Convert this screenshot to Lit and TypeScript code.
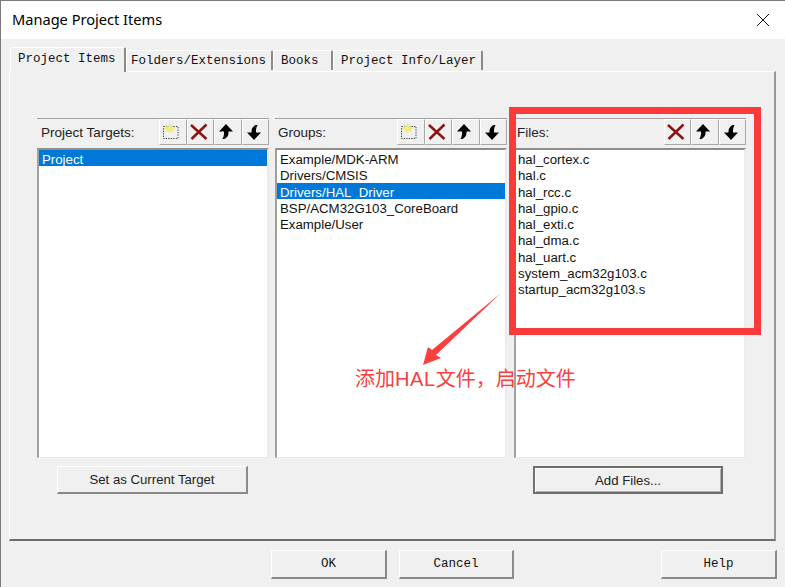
import { LitElement, html, css, svg } from "lit";
import { customElement } from "lit/decorators.js";

const newIcon = svg`<svg class="ic" viewBox="0 0 18 18" width="18" height="18">
  <rect x="1.5" y="3.5" width="14.5" height="12" fill="none" stroke="#444" stroke-width="1" stroke-dasharray="1.3 1.2"/>
  <path d="M7.5 0.5L8.6 3.4L11.5 1.5L10 4.2L13.5 5L10.2 6L11.5 9L8.6 7L7.5 10L6.5 7L3.5 8.5L5 6L1.8 5L5 4.2L3.5 1.5L6.4 3.4Z" fill="#f5f060" stroke="#d8d890" stroke-width=".4"/>
</svg>`;
const delIcon = svg`<svg class="ic" viewBox="0 0 18 18" width="18" height="18">
  <path d="M1 2L16.5 16M16.5 1.5L1.5 16" stroke="#8c1414" stroke-width="2.5" fill="none"/>
</svg>`;
const upIcon = svg`<svg class="ic" viewBox="0 0 18 18" width="18" height="18">
  <path d="M9 1L16 8.5H11.5V10C11.5 12.5 10 14.5 7.5 16H5.5C6.5 14 7 12.5 7 10V8.5H2Z" fill="#000"/>
</svg>`;
const downIcon = svg`<svg class="ic" viewBox="0 0 18 18" width="18" height="18">
  <path d="M9 17L2 9.5H6.5V8C6.5 5.5 8 3.5 10.5 2H12.5C11.5 4 11 5.5 11 8V9.5H16Z" fill="#000"/>
</svg>`;

const columns = [
  { title: "Project Targets:", icons: [newIcon, delIcon, upIcon, downIcon], items: ["Project"], sel: 0, btn: "Set as Current Target", cls: "c1" },
  { title: "Groups:", icons: [newIcon, delIcon, upIcon, downIcon], items: ["Example/MDK-ARM", "Drivers/CMSIS", "Drivers/HAL_Driver", "BSP/ACM32G103_CoreBoard", "Example/User"], sel: 2, btn: "", cls: "c2" },
  { title: "Files:", icons: [delIcon, upIcon, downIcon], items: ["hal_cortex.c", "hal.c", "hal_rcc.c", "hal_gpio.c", "hal_exti.c", "hal_dma.c", "hal_uart.c", "system_acm32g103.c", "startup_acm32g103.s"], sel: -1, btn: "Add Files...", cls: "c3" },
];

@customElement("app-root")
export class AppRoot extends LitElement {
  static styles = css`
    :host { display: block; width: 785px; height: 587px; overflow: hidden; position: relative; background: #f0f0f0; font-family: "Liberation Sans", Arial, sans-serif; }
    .win { height: 587px; display: flex; flex-direction: column; border-left: 1px solid #7a7a7a; box-sizing: border-box; }
    .title { height: 39px; flex: none; box-sizing: border-box; border-top: 1px solid #7a7a7a; background: #fff; display: flex; align-items: center; justify-content: space-between; padding: 0 15px 2px 11px; font: 14.6px "Noto Sans", sans-serif; color: #000; }
    .close { display: block; margin-top: 2px; }
    .tabs { display: flex; align-items: flex-end; height: 32px; flex: none; padding-left: 9px; box-sizing: border-box; position: relative; z-index: 1; }
    .tab { box-sizing: border-box; height: 20px; font: 12.5px "Liberation Mono", monospace; color: #111; background: #f0f0f0; border-top: 1px solid #fff; border-left: 1px solid #fff; border-right: 2px solid #8a8a8a; border-radius: 2px 2px 0 0; display: flex; align-items: center; white-space: nowrap; margin-bottom: 1px; }
    .tab.active { height: 25px; margin-bottom: -1px; padding-bottom: 3px; }
    .panel { box-sizing: border-box; width: 767px; height: 470px; flex: none; margin-left: 8px; border-top: 1px solid #fff; border-left: 1px solid #fff; border-right: 2px solid #9a9a9a; border-bottom: 2px solid #6e6e6e; padding: 46px 0 0 27px; display: flex; gap: 6px; }
    .col { width: 232px; flex: none; display: flex; flex-direction: column; }
    .col.c3 { margin-left: 1px; }
    .head { height: 27px; box-sizing: border-box; border-top: 1px solid #a0a0a0; display: flex; align-items: stretch; justify-content: space-between; font-size: 13.5px; color: #222; }
    .label { padding: 5px 0 0 4px; line-height: 18px; white-space: nowrap; }
    .c2 .label, .c3 .label { padding-left: 3px; }
    .tools { display: flex; }
    .tool { box-sizing: border-box; width: 27.5px; height: 26px; padding-right: 3px; border-top: 1px solid #fff; border-left: 1px solid #fff; border-right: 1px solid #a8a8a8; border-bottom: 1px solid #a8a8a8; display: flex; align-items: center; justify-content: center; }
    .ic { display: block; }
    .list { box-sizing: border-box; height: 310px; margin-top: 3px; background: #fff; border-top: 2px solid #8e8e8e; border-left: 2px solid #a0a0a0; border-right: 2px solid #ececec; border-bottom: 1px solid #e8e8e8; font-size: 13.25px; color: #111; }
    .row { height: 16.25px; line-height: 19px; padding-left: 3px; white-space: nowrap; }
    .c3 .row { padding-left: 2px; }
    .row.sel { background: #0078d7; color: #fff; }
    .btn { box-sizing: border-box; height: 28px; width: 191px; margin-top: 8px; background: #f0f0f0; font-size: 13.2px; color: #222; display: flex; align-items: center; justify-content: center; border-top: 1px solid #fff; border-left: 1px solid #fff; border-right: 2px solid #8a8a8a; border-bottom: 2px solid #8a8a8a; }
    .c1 .btn { margin-left: 20px; }
    .c3 .btn { margin-left: 19px; width: 190px; border: 2px solid #6e6e6e; box-shadow: inset 1px 1px 0 #fff, inset -1px -1px 0 #b0b0b0; }
    .foot { display: flex; padding: 9px 0 0 270px; flex: none; }
    .fbtn { box-sizing: border-box; height: 29px; width: 116px; font: 12.5px "Liberation Mono", monospace; color: #111; background: #f0f0f0; display: flex; align-items: center; justify-content: center; border-top: 1px solid #fff; border-left: 1px solid #fff; border-right: 2px solid #8a8a8a; border-bottom: 2px solid #8a8a8a; }
    .fbtn.cancel { margin-left: 12px; width: 115px; }
    .fbtn.help { margin-left: 147px; width: 116px; }
    .mark { position: absolute; left: 509px; top: 107px; width: 252px; height: 228px; box-sizing: border-box; border: 7px solid #fc3a3a; }
    .arrow { position: absolute; left: 415px; top: 285px; }
    .note { position: absolute; left: 355px; top: 367px; font: 20px/24px "Liberation Sans", "Noto Sans CJK SC", sans-serif; color: #f94040; white-space: nowrap; }
    .latin { letter-spacing: 0.6px; }
  `;

  render() {
    const tabs = [["Project Items", 116, true, 7], ["Folders/Extensions", 147, false, 4], ["Books", 60, false, 7], ["Project Info/Layer", 150, false, 7]] as const;
    return html`
      <div class="win">
        <div class="title"><span>Manage Project Items</span>
          <svg class="close" width="14" height="14" viewBox="0 0 14 14"><path d="M1 1L13 13M13 1L1 13" stroke="#111" stroke-width="1" fill="none"/></svg>
        </div>
        <div class="tabs">
          ${tabs.map(([t, w, a, p]) => html`<div class="tab ${a ? "active" : ""}" style="width:${w}px;padding-left:${p}px">${t}</div>`)}
        </div>
        <div class="panel">
          ${columns.map(c => html`
            <div class="col ${c.cls}">
              <div class="head">
                <div class="label">${c.title}</div>
                <div class="tools">${c.icons.map(i => html`<div class="tool">${i}</div>`)}</div>
              </div>
              <div class="list">
                ${c.items.map((it, i) => html`<div class="row ${i === c.sel ? "sel" : ""}">${it}</div>`)}
              </div>
              ${c.btn ? html`<div class="btn">${c.btn}</div>` : ""}
            </div>`)}
        </div>
        <div class="foot">
          <div class="fbtn">OK</div>
          <div class="fbtn cancel">Cancel</div>
          <div class="fbtn help">Help</div>
        </div>
      </div>
      <div class="mark"></div>
      <svg class="arrow" width="90" height="85" viewBox="415 285 90 85">
        <path d="M501 293L436 355L441 358L423 365L428 347L432 350Z" fill="#f94040"/>
      </svg>
      <div class="note">添加<span class="latin">HAL</span>文件，启动文件</div>
    `;
  }
}
